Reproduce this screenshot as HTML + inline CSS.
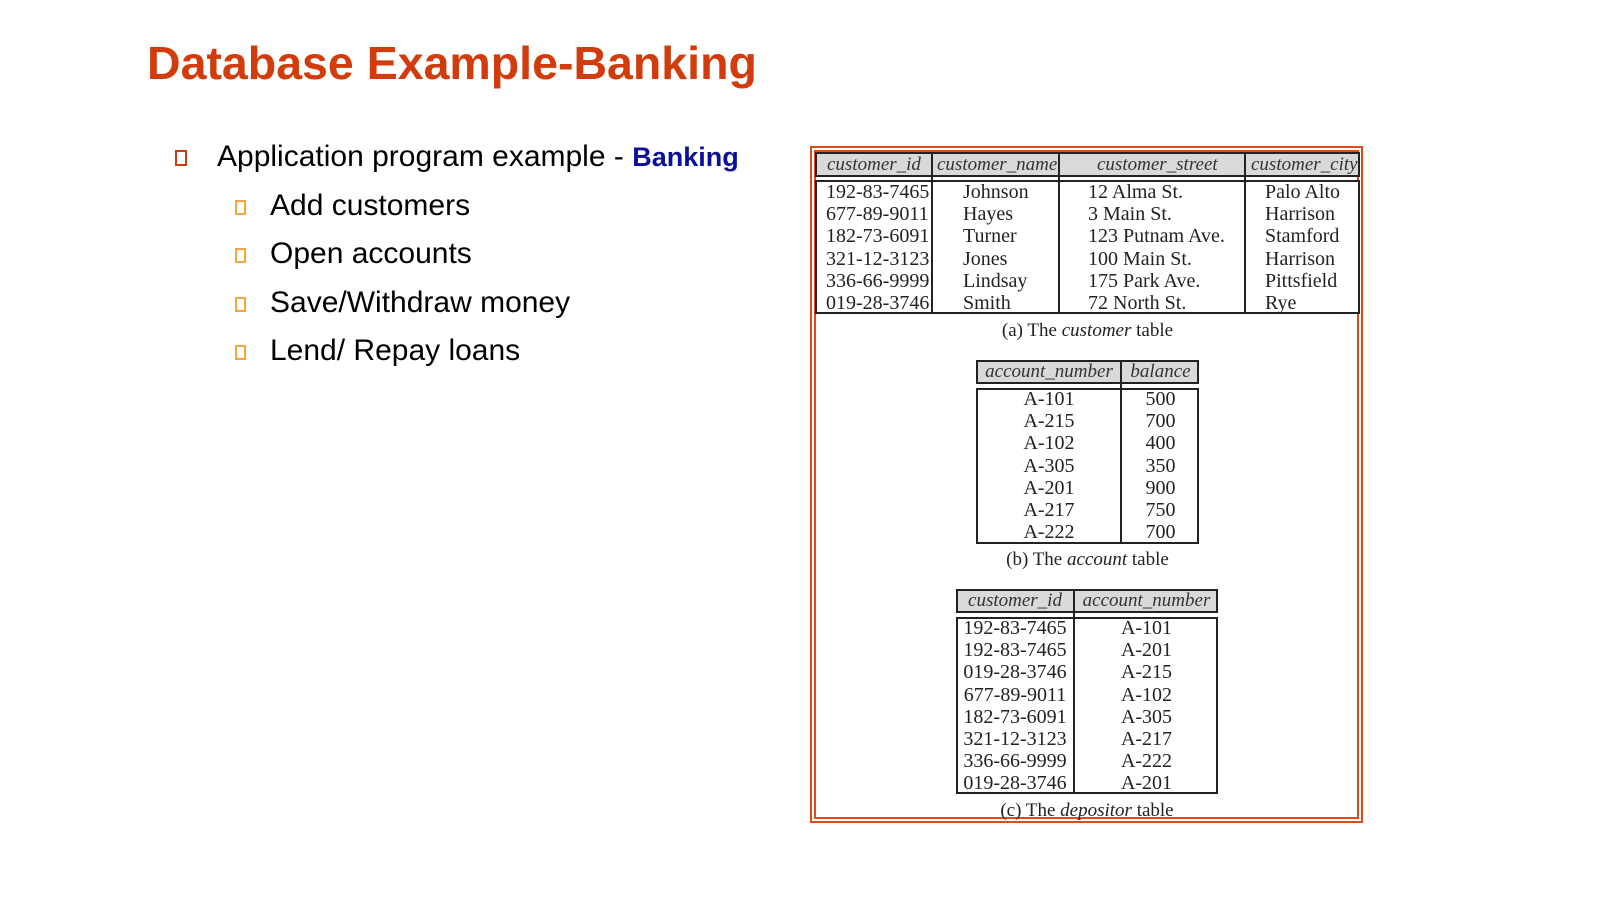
<!DOCTYPE html>
<html><head><meta charset="utf-8"><style>
*{margin:0;padding:0;box-sizing:border-box}
body{width:1600px;height:900px;background:#fff;position:relative;overflow:hidden;font-family:"Liberation Sans",Arial,sans-serif}
.a{position:absolute}
h1{position:absolute;left:147px;top:36px;font-size:46.5px;font-weight:bold;color:#d23c0c;white-space:nowrap}
.l1{position:absolute;left:217px;font-size:30px;color:#000;white-space:nowrap}
.l2{position:absolute;left:270px;font-size:30px;color:#000;white-space:nowrap}
.b1{position:absolute;width:12px;height:16px;border:2px solid #d03a0a}
.b2{position:absolute;width:11px;height:15px;border:2px solid #f7a43a}
.s{font-family:"Liberation Serif","DejaVu Serif",serif;font-size:20px;color:#222}
.hd{position:absolute;background:#d9d9d9;border:2px solid #222}
.bd{position:absolute;border:2px solid #222;background:#fff}
.vl{position:absolute;width:2px;background:#222}
.col{position:absolute;line-height:22.2px;white-space:nowrap}
.hc{position:absolute;font-style:italic;color:#333;white-space:nowrap;line-height:20px;font-size:19px}
.cap{position:absolute;white-space:nowrap;text-align:center;font-size:19px}
</style></head><body>
<h1>Database Example-Banking</h1>
<div class="b1" style="left:175px;top:150px"></div>
<div class="l1" style="top:140px">Application program example - <b style="color:#0a0f99;font-size:27px">Banking</b></div>
<div class="b2" style="left:235px;top:200px"></div><div class="l2" style="top:189px">Add customers</div>
<div class="b2" style="left:235px;top:248px"></div><div class="l2" style="top:237px">Open accounts</div>
<div class="b2" style="left:235px;top:297px"></div><div class="l2" style="top:286px">Save/Withdraw money</div>
<div class="b2" style="left:235px;top:345px"></div><div class="l2" style="top:334px">Lend/ Repay loans</div>

<div class="a" style="left:810px;top:146px;width:553px;height:677px;border:2px solid #e04a1a"></div>
<div class="a" style="left:814px;top:150px;width:545px;height:669px;border:2px solid #e04a1a"></div>

<div class="s">
<!-- customer -->
<div class="hd" style="left:815px;top:152px;width:545px;height:25px"></div>
<div class="bd" style="left:815px;top:180px;width:545px;height:134px"></div>
<div class="vl" style="left:931px;top:152px;height:162px"></div>
<div class="vl" style="left:1058px;top:152px;height:162px"></div>
<div class="vl" style="left:1244px;top:152px;height:162px"></div>
<div class="hc" style="left:827px;top:155px">customer_id</div>
<div class="hc" style="left:937px;top:155px">customer_name</div>
<div class="hc" style="left:1097px;top:155px">customer_street</div>
<div class="hc" style="left:1251px;top:155px">customer_city</div>
<div class="col" style="left:826px;top:181px">192-83-7465<br>677-89-9011<br>182-73-6091<br>321-12-3123<br>336-66-9999<br>019-28-3746</div>
<div class="col" style="left:963px;top:181px">Johnson<br>Hayes<br>Turner<br>Jones<br>Lindsay<br>Smith</div>
<div class="col" style="left:1088px;top:181px">12 Alma St.<br>3 Main St.<br>123 Putnam Ave.<br>100 Main St.<br>175 Park Ave.<br>72 North St.</div>
<div class="col" style="left:1265px;top:181px">Palo Alto<br>Harrison<br>Stamford<br>Harrison<br>Pittsfield<br>Rye</div>
<div class="cap" style="left:815px;width:545px;top:320px">(a) The <i>customer</i> table</div>

<!-- account -->
<div class="hd" style="left:976px;top:360px;width:223px;height:24px"></div>
<div class="bd" style="left:976px;top:388px;width:223px;height:156px"></div>
<div class="vl" style="left:1120px;top:360px;height:184px"></div>
<div class="hc" style="left:976px;width:146px;text-align:center;top:362px">account_number</div>
<div class="hc" style="left:1122px;width:77px;text-align:center;top:362px">balance</div>
<div class="col" style="left:976px;width:146px;text-align:center;top:388px">A-101<br>A-215<br>A-102<br>A-305<br>A-201<br>A-217<br>A-222</div>
<div class="col" style="left:1122px;width:77px;text-align:center;top:388px">500<br>700<br>400<br>350<br>900<br>750<br>700</div>
<div class="cap" style="left:976px;width:223px;top:549px">(b) The <i>account</i> table</div>

<!-- depositor -->
<div class="hd" style="left:956px;top:589px;width:262px;height:24px"></div>
<div class="bd" style="left:956px;top:617px;width:262px;height:177px"></div>
<div class="vl" style="left:1073px;top:589px;height:205px"></div>
<div class="hc" style="left:956px;width:118px;text-align:center;top:591px">customer_id</div>
<div class="hc" style="left:1075px;width:143px;text-align:center;top:591px">account_number</div>
<div class="col" style="left:956px;width:118px;text-align:center;top:617px">192-83-7465<br>192-83-7465<br>019-28-3746<br>677-89-9011<br>182-73-6091<br>321-12-3123<br>336-66-9999<br>019-28-3746</div>
<div class="col" style="left:1075px;width:143px;text-align:center;top:617px">A-101<br>A-201<br>A-215<br>A-102<br>A-305<br>A-217<br>A-222<br>A-201</div>
<div class="cap" style="left:956px;width:262px;top:800px">(c) The <i>depositor</i> table</div>
</div>
</body></html>
